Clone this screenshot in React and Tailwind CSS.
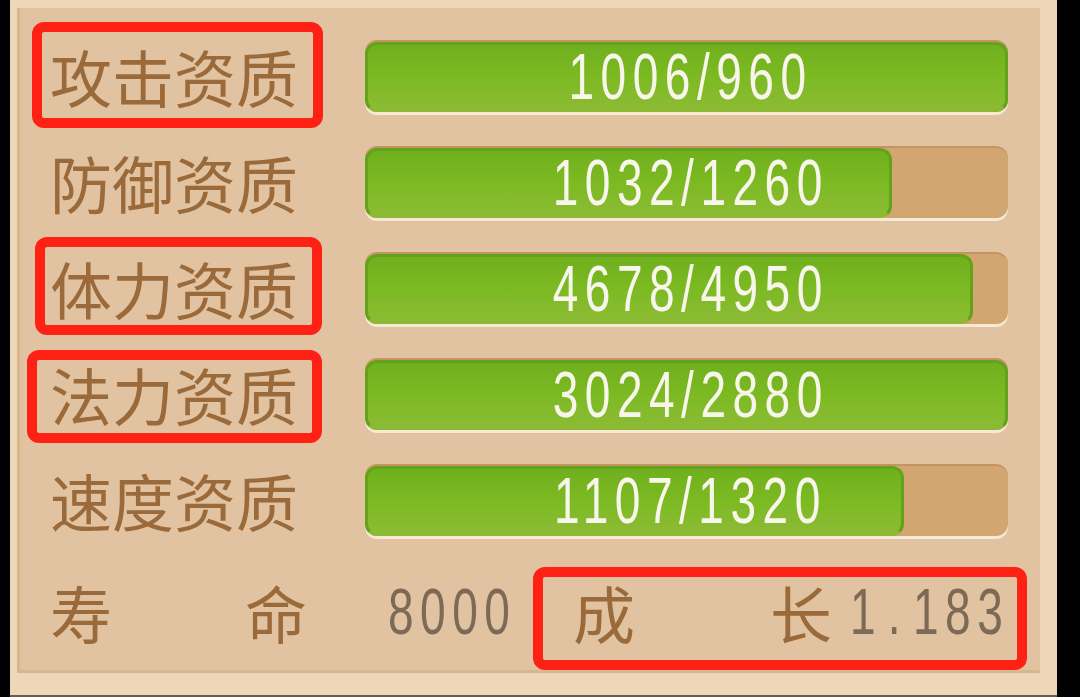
import React from 'react';

const cjk = { fontFamily: '"Noto Sans CJK SC", "Noto Sans", sans-serif' };
const num = { fontFamily: '"Liberation Sans", Arial, sans-serif' };

// 资质条
const rows = [
  { label: '攻击资质', cur: 1006, max: 960, box: 'left-[12px] top-[-1px] h-[106px] w-[291px]' },
  { label: '防御资质', cur: 1032, max: 1260, box: null },
  { label: '体力资质', cur: 4678, max: 4950, box: 'left-[15px] top-[2px] h-[98px] w-[287px]' },
  { label: '法力资质', cur: 3024, max: 2880, box: 'left-[7px] top-[9px] h-[93px] w-[295px]' },
  { label: '速度资质', cur: 1107, max: 1320, box: null },
];

const Bar = ({ cur, max }) => {
  const pct = Math.min(100, (cur / max) * 100);
  return (
    <div className="relative flex h-[72px] w-[643px] rounded-[12px] border-t-2 border-[#c49461] bg-[#d2a670] shadow-[0_3px_0_#f6ead5]">
      <div
        className="h-full rounded-[12px] border-[3px] border-[#63a31b] border-b-[#8cb934] bg-linear-to-b from-[#70b01e] via-[#7cba22] to-[#8cbb34]"
        style={{ width: `${pct}%` }}
      />
      <div className="absolute inset-0 flex items-center justify-center pl-[8px]">
        <span
          className="inline-block scale-x-[0.72] text-[64px] leading-none tracking-[9px] text-[#f8f6ea]"
          style={num}
        >
          {cur}/{max}
        </span>
      </div>
    </div>
  );
};

const RedBox = ({ cls }) => (
  <div className={`pointer-events-none absolute rounded-[12px] border-[10px] border-[#ff2214] ${cls}`} />
);

export default function App() {
  return (
    <div className="flex h-[697px] w-[1080px] bg-black pl-[10px]">
      <div className="flex h-full w-[1047px] flex-col border-b-2 border-[#6b5b48] bg-[#eed7b8] pb-[22px] pl-[7px] pr-[17px] pt-[8px]">
        <div className="flex flex-1 flex-col border-b-[3px] border-l-[3px] border-[#d9b68c] bg-[#e1c3a1] pt-[15px]">
          {rows.map((r) => (
            <div key={r.label} className="relative flex h-[106px] items-center">
              {r.box && <RedBox cls={r.box} />}
              <div className="w-[345px] shrink-0 pl-[30px] text-[62px] leading-none text-[#9b6a3b]" style={cjk}>
                {r.label}
              </div>
              <Bar cur={r.cur} max={r.max} />
            </div>
          ))}

          {/* 寿命 / 成长 */}
          <div className="relative flex flex-1 items-center">
            <RedBox cls="left-[513px] top-[14px] h-[103px] w-[494px]" />
            <div className="flex w-[345px] shrink-0 justify-between pl-[30px] pr-[58px] text-[62px] leading-none text-[#9b6a3b]" style={cjk}>
              <span>寿</span>
              <span>命</span>
            </div>
            <div className="w-[168px] shrink-0 pl-[23px]">
              <span className="inline-block origin-left scale-x-[0.72] text-[64px] leading-none tracking-[9px] text-[#7c6a56]" style={num}>
                8000
              </span>
            </div>
            <div className="flex w-[494px] shrink-0 items-center pl-[40px]">
              <span className="w-[197px] shrink-0 text-[62px] leading-none text-[#9b6a3b]" style={cjk}>成</span>
              <span className="shrink-0 text-[62px] leading-none text-[#9b6a3b]" style={cjk}>长</span>
              <span className="ml-[18px] inline-block shrink-0 origin-left scale-x-[0.72] whitespace-nowrap text-[64px] leading-none tracking-[9px] text-[#7c6a56]" style={num}>
                1<span className="mx-[8px]">.</span>183
              </span>
            </div>
          </div>
        </div>
      </div>
    </div>
  );
}
